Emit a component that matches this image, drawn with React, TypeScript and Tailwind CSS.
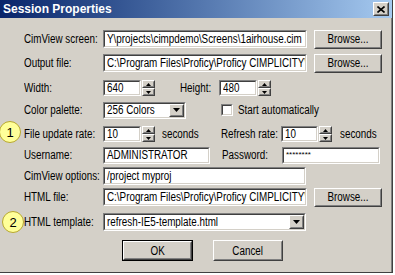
import React from "react";

const F = "font-['Liberation_Sans',Arial,sans-serif]";

function N({ children, center = false }: { children: React.ReactNode; center?: boolean }) {
  return (
    <span className={center ? "inline-block whitespace-nowrap leading-none scale-x-[0.82] origin-center" : "inline-block whitespace-nowrap leading-none scale-x-[0.82] origin-left"}>
      {children}
    </span>
  );
}

function Sunken({ className = "", children }: { className?: string; children?: React.ReactNode }) {
  return (
    <div className={"border border-t-[#808080] border-l-[#808080] border-b-white border-r-white " + className}>
      <div className="h-full border border-t-[#404040] border-l-[#404040] border-b-[#d4d0c8] border-r-[#d4d0c8] bg-white flex items-center overflow-hidden whitespace-nowrap">
        {children}
      </div>
    </div>
  );
}

function Raised({ className = "", children }: { className?: string; children?: React.ReactNode }) {
  return (
    <div className={"border border-t-white border-l-white border-b-[#404040] border-r-[#404040] bg-[#d4d0c8] " + className}>
      <div className="h-full border border-t-[#d4d0c8] border-l-[#d4d0c8] border-b-[#808080] border-r-[#808080] flex items-center justify-center overflow-hidden">
        {children}
      </div>
    </div>
  );
}

function Spin() {
  return (
    <div className="flex flex-col w-[13px] h-[16px]">
      <Raised className="h-[8px] w-[13px]">
        <svg width="5" height="3" viewBox="0 0 5 3"><path d="M2.5 0 L5 3 L0 3 Z" fill="#000" /></svg>
      </Raised>
      <Raised className="h-[8px] w-[13px]">
        <svg width="5" height="3" viewBox="0 0 5 3"><path d="M0 0 L5 0 L2.5 3 Z" fill="#000" /></svg>
      </Raised>
    </div>
  );
}

function DropBtn() {
  return (
    <Raised className="h-full w-[15px] shrink-0">
      <svg width="7" height="4" viewBox="0 0 7 4"><path d="M0 0 L7 0 L3.5 4 Z" fill="#000" /></svg>
    </Raised>
  );
}

function Text({ children }: { children: React.ReactNode }) {
  return (
    <span className="pl-[2px] flex items-center">
      <N>{children}</N>
    </span>
  );
}

function Label({ w = "w-[79px]", children }: { w?: string; children: React.ReactNode }) {
  return (
    <span className={w + " shrink-0 flex items-center"}>
      <N>{children}</N>
    </span>
  );
}

function Badge({ n }: { n: string }) {
  return (
    <div className="w-[22px] h-[22px] rounded-full bg-[#ffff99] border border-[#b8a830] flex items-center justify-center text-[13px] leading-none text-black">
      {n}
    </div>
  );
}

export default function App() {
  return (
    <div className={"w-[395px] h-[275px] bg-white relative overflow-hidden text-[12px] text-black " + F}>
      <div className="w-[393px] h-[273px] flex flex-col bg-[#d4d0c8] border-r border-b border-r-[#404040] border-b-[#404040]">
        {/* title bar */}
        <div className="h-[18px] shrink-0 flex items-center justify-between bg-gradient-to-r from-[#0a246a] to-[#a6caf0] pl-[3px] pr-[3px]">
          <span className="font-bold text-[12px] text-white leading-none">Session Properties</span>
          <Raised className="w-[16px] h-[14px]">
            <svg width="8" height="7" viewBox="0 0 8 7">
              <path d="M0.5 0.5 L7.5 6.5 M7.5 0.5 L0.5 6.5" stroke="#000" strokeWidth="1.6" />
            </svg>
          </Raised>
        </div>
        {/* body */}
        <div className="flex-1 border-r border-r-[#808080] flex flex-col pl-[24px] pt-[12px]">
          {/* CimView screen */}
          <div className="flex items-center h-[18px]">
            <Label>CimView screen:</Label>
            <Sunken className="w-[204px] h-[18px] shrink-0"><Text>Y\projects\cimpdemo\Screens\1airhouse.cim</Text></Sunken>
            <Raised className="ml-[7px] w-[68px] h-[19px] shrink-0"><N center>Browse...</N></Raised>
          </div>
          {/* Output file */}
          <div className="flex items-center h-[18px] mt-[6px]">
            <Label>Output file:</Label>
            <Sunken className="w-[204px] h-[18px] shrink-0"><Text>C:\Program Files\Proficy\Proficy CIMPLICITY\</Text></Sunken>
            <Raised className="ml-[7px] w-[68px] h-[19px] shrink-0"><N center>Browse...</N></Raised>
          </div>
          {/* Width / Height */}
          <div className="flex items-center h-[18px] mt-[7px]">
            <Label>Width:</Label>
            <Sunken className="w-[38px] h-[16px] shrink-0"><Text>640</Text></Sunken>
            <div className="ml-[1px]"><Spin /></div>
            <Label w="ml-[25px] w-[39px]">Height:</Label>
            <Sunken className="w-[38px] h-[16px] shrink-0"><Text>480</Text></Sunken>
            <div className="ml-[1px]"><Spin /></div>
          </div>
          {/* Color palette */}
          <div className="flex items-center h-[18px] mt-[4px]">
            <Label>Color palette:</Label>
            <Sunken className="w-[83px] h-[17px] shrink-0">
              <div className="flex-1 overflow-hidden"><Text>256 Colors</Text></div>
              <DropBtn />
            </Sunken>
            <div className="ml-[35px] w-[12px] h-[12px] shrink-0 border border-t-[#808080] border-l-[#808080] border-b-white border-r-white">
              <div className="w-full h-full bg-white border border-t-[#404040] border-l-[#404040] border-b-[#d4d0c8] border-r-[#d4d0c8]" />
            </div>
            <Label w="ml-[5px] w-[90px]">Start automatically</Label>
          </div>
          {/* File update rate */}
          <div className="flex items-center h-[18px] mt-[6px]">
            <Label>File update rate:</Label>
            <Sunken className="w-[38px] h-[16px] shrink-0"><Text>10</Text></Sunken>
            <div className="ml-[1px]"><Spin /></div>
            <Label w="ml-[7px] w-[59px]">seconds</Label>
            <Label w="w-[60px]">Refresh rate:</Label>
            <Sunken className="w-[37px] h-[16px] shrink-0"><Text>10</Text></Sunken>
            <div className="ml-[1px]"><Spin /></div>
            <Label w="ml-[8px] w-[45px]">seconds</Label>
          </div>
          {/* Username / Password */}
          <div className="flex items-center h-[18px] mt-[3px]">
            <Label>Username:</Label>
            <Sunken className="w-[107px] h-[17px] shrink-0"><Text>ADMINISTRATOR</Text></Sunken>
            <Label w="ml-[12px] w-[60px]">Password:</Label>
            <Sunken className="w-[98px] h-[17px] shrink-0"><span className="pl-[2px] text-[8px] leading-none">********</span></Sunken>
          </div>
          {/* CimView options */}
          <div className="flex items-center h-[18px] mt-[3px]">
            <Label>CimView options:</Label>
            <Sunken className="w-[203px] h-[18px] shrink-0"><Text>/project myproj</Text></Sunken>
          </div>
          {/* HTML file */}
          <div className="flex items-center h-[18px] mt-[3px]">
            <Label>HTML file:</Label>
            <Sunken className="w-[204px] h-[18px] shrink-0"><Text>C:\Program Files\Proficy\Proficy CIMPLICITY\</Text></Sunken>
            <Raised className="ml-[7px] w-[68px] h-[19px] shrink-0"><N center>Browse...</N></Raised>
          </div>
          {/* HTML template */}
          <div className="flex items-center h-[18px] mt-[7px]">
            <Label>HTML template:</Label>
            <Sunken className="w-[203px] h-[18px] shrink-0">
              <div className="flex-1 overflow-hidden"><Text>refresh-IE5-template.html</Text></div>
              <DropBtn />
            </Sunken>
          </div>
          {/* Buttons */}
          <div className="flex items-center mt-[9px] pl-[98px]">
            <div className="border border-black">
              <Raised className="w-[69px] h-[19px]"><N center>OK</N></Raised>
            </div>
            <Raised className="ml-[20px] w-[70px] h-[21px]"><N center>Cancel</N></Raised>
          </div>
        </div>
      </div>
      <div className="absolute left-[-1px] top-[121px]"><Badge n="1" /></div>
      <div className="absolute left-[2px] top-[211px]"><Badge n="2" /></div>
    </div>
  );
}
